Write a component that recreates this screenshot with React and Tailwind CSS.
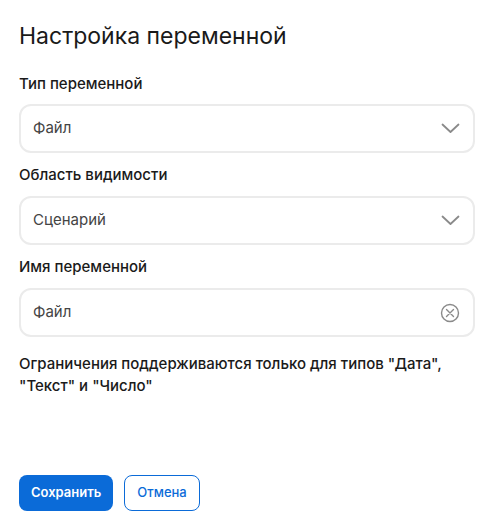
import React from "react";

function Chevron() {
  return (
    <svg width="19" height="11" viewBox="0 0 19 11" fill="none">
      <path d="M1.5 1.5 L9.5 9 L17.5 1.5" stroke="#8a8a8a" strokeWidth="1.8" strokeLinecap="round" strokeLinejoin="round" />
    </svg>
  );
}

function ClearIcon() {
  return (
    <svg width="20" height="20" viewBox="0 0 20 20" fill="none">
      <circle cx="10" cy="10" r="8.5" stroke="#8a8a8a" strokeWidth="1.4" />
      <path d="M6.5 6.5 L13.5 13.5 M13.5 6.5 L6.5 13.5" stroke="#8a8a8a" strokeWidth="1.4" strokeLinecap="round" />
    </svg>
  );
}

function Field({ value, icon }) {
  return (
    <div className="flex h-[49px] items-center justify-between rounded-[12px] border-2 border-[#ebebeb] bg-white pl-[12px] pr-[13px]">
      <span className="text-[15px] font-normal text-[#444444]">{value}</span>
      {icon}
    </div>
  );
}

export default function App() {
  return (
    <div className="min-h-[526px] w-[491px] bg-white px-[19px] pt-[22px] text-[#1a1a1a]" style={{ fontFamily: "Inter, 'Noto Sans', sans-serif" }}>
      <h1 className="text-[23px] font-normal leading-[28px]">Настройка переменной</h1>
      <div className="mt-[24px] text-[15px] font-medium leading-[20px]">Тип переменной</div>
      <div className="mt-[10px] mr-[-3px]">
        <Field value="Файл" icon={<Chevron />} />
      </div>
      <div className="mt-[12px] text-[15px] font-medium leading-[20px]">Область видимости</div>
      <div className="mt-[11px] mr-[-3px]">
        <Field value="Сценарий" icon={<Chevron />} />
      </div>
      <div className="mt-[12px] text-[15px] font-medium leading-[20px]">Имя переменной</div>
      <div className="mt-[11px] mr-[-3px]">
        <Field value="Файл" icon={<ClearIcon />} />
      </div>
      <p className="mt-[16px] text-[15px] font-medium leading-[22px]">
        Ограничения поддерживаются только для типов "Дата",
        <br />
        "Текст" и "Число"
      </p>
      <div className="mt-[78px] flex gap-[11px]">
        <button className="h-[36px] rounded-[8px] bg-[#0b6bd8] px-[12px] text-[13px] font-semibold text-white">Сохранить</button>
        <button className="h-[36px] rounded-[8px] border border-[#0b6bd8] bg-white px-[12px] text-[13px] font-medium text-[#0b6bd8]">Отмена</button>
      </div>
    </div>
  );
}
